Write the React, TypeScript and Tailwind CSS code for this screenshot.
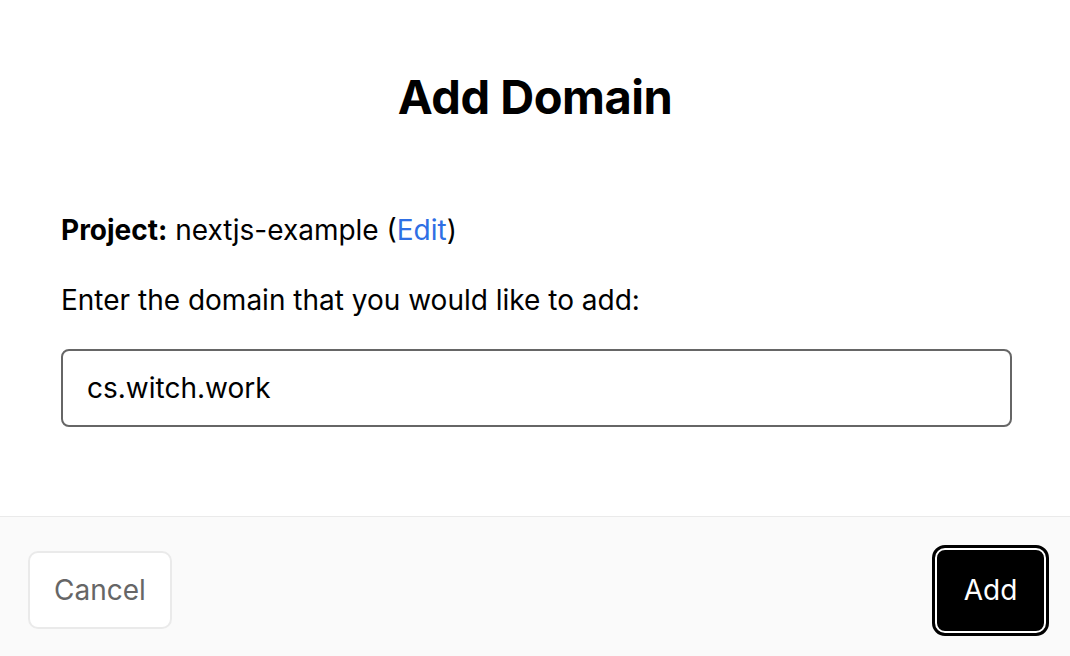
export default function App() {
  return (
    <div className="w-[1070px] h-[656px] bg-white flex flex-col font-['Inter',sans-serif] text-black">
      {/* Body */}
      <div className="flex-1 flex flex-col px-[61px] pt-[69px] border-b border-[#eaeaea]">
        <h1 className="text-center text-[47px] leading-[56px] font-bold tracking-[-0.5px]">Add Domain</h1>

        <p className="mt-[87px] text-[28px] leading-[36px]">
          <span className="font-bold">Project:</span> nextjs-example (
          <a className="text-[#2f6fe4]">Edit</a>)
        </p>

        <p className="mt-[34px] text-[28px] leading-[36px]">Enter the domain that you would like to add:</p>

        <div className="mt-[31px] w-[951px] h-[78px] border-2 border-[#666] rounded-[8px] flex items-center px-[24px] text-[28px]">
          cs.witch.work
        </div>
      </div>

      {/* Footer */}
      <div className="h-[139px] bg-[#fafafa] flex items-center justify-between pt-[7px] pl-[28px] pr-[21px]">
        <button className="w-[144px] h-[78px] bg-white border-2 border-[#eaeaea] rounded-[10px] text-[28px] text-[#666]">
          Cancel
        </button>
        <button className="mr-[3px] w-[111px] h-[85px] bg-black border-2 border-white rounded-[10px] outline-3 outline-black text-white text-[28px]">
          Add
        </button>
      </div>
    </div>
  );
}
